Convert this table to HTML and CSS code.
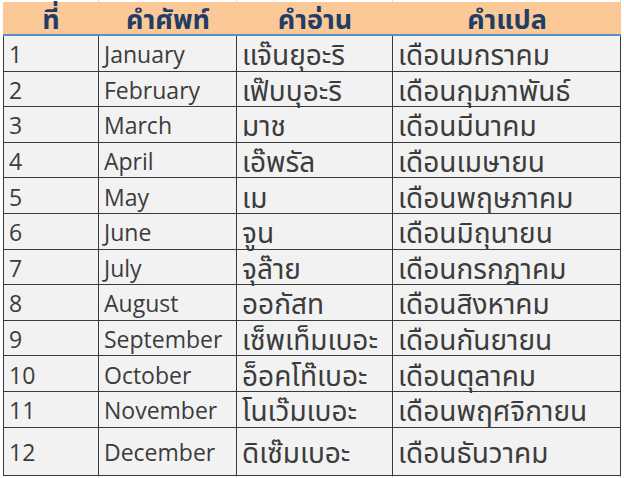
FILE: index.html
```html
<!DOCTYPE html>
<html lang="th">
<head>
<meta charset="utf-8">
<title>Months</title>
<link rel="stylesheet" href="styles.css">
</head>
<body>
<div class="sheet">
  <div class="strip top"><span></span><span></span><span></span><span></span></div>
  <div class="table">
    <div class="row head"><div class="th">ที่</div><div class="th">คำศัพท์</div><div class="th">คำอ่าน</div><div class="th">คำแปล</div></div>
    <div class="row"><div>1</div><div>January</div><div class="th">แจ๊นยุอะริ</div><div class="th">เดือนมกราคม</div></div>
    <div class="row"><div>2</div><div>February</div><div class="th">เฟ๊บบุอะริ</div><div class="th">เดือนกุมภาพันธ์</div></div>
    <div class="row"><div>3</div><div>March</div><div class="th">มาช</div><div class="th">เดือนมีนาคม</div></div>
    <div class="row"><div>4</div><div>April</div><div class="th">เอ๊พรัล</div><div class="th">เดือนเมษายน</div></div>
    <div class="row"><div>5</div><div>May</div><div class="th">เม</div><div class="th">เดือนพฤษภาคม</div></div>
    <div class="row"><div>6</div><div>June</div><div class="th">จูน</div><div class="th">เดือนมิถุนายน</div></div>
    <div class="row"><div>7</div><div>July</div><div class="th">จุล๊าย</div><div class="th">เดือนกรกฎาคม</div></div>
    <div class="row"><div>8</div><div>August</div><div class="th">ออกัสท</div><div class="th">เดือนสิงหาคม</div></div>
    <div class="row"><div>9</div><div>September</div><div class="th">เซ็พเท็มเบอะ</div><div class="th">เดือนกันยายน</div></div>
    <div class="row"><div>10</div><div>October</div><div class="th">อ็อคโท๊เบอะ</div><div class="th">เดือนตุลาคม</div></div>
    <div class="row"><div>11</div><div>November</div><div class="th">โนเว๊มเบอะ</div><div class="th">เดือนพฤศจิกายน</div></div>
    <div class="row tall"><div>12</div><div>December</div><div class="th">ดิเซ๊มเบอะ</div><div class="th">เดือนธันวาคม</div></div>
  </div>
  <div class="strip bottom"><span></span><span></span><span></span><span></span></div>
</div>
</body>
</html>
```
FILE: styles.css
```css
html, body {
  margin: 0;
  padding: 0;
  background: #ffffff;
}
.sheet {
  width: 624px;
  height: 478px;
  overflow: hidden;
  padding-left: 3px;
  box-sizing: border-box;
  font-family: "Open Sans", "Noto Sans", "Noto Sans Thai", sans-serif;
}
.strip {
  display: grid;
  grid-template-columns: 96px 138px 156px 228px;
}
.strip span {
  border-right: 1px solid #d9d9d9;
}
.strip.top { height: 2px; }
.strip.bottom { height: 3px; }
.table {
  width: 618px;
  border-left: 1px solid #3a3a3a;
  border-right: 1px solid #3a3a3a;
  box-sizing: border-box;
  background: #f2f2f2;
}
.row {
  display: grid;
  grid-template-columns: 95px 138px 156px 227px;
  height: 35.6px;
  box-sizing: border-box;
  border-bottom: 1px solid #3a3a3a;
  font-size: 23px;
  color: #3c3c3c;
}
.row > div {
  display: flex;
  align-items: center;
  padding-left: 5px;
  padding-top: 3px;
  line-height: 1;
  border-right: 1px solid #3a3a3a;
  white-space: nowrap;
}
.row > div.th {
  font-size: 28px;
  padding-top: 2px;
}
.row > div:last-child { border-right: none; }
.row.head {
  height: 34px;
  background: #fbc898;
  border-bottom: 2px solid #5b8cc6;
  color: #1f3d66;
  font-weight: bold;
  margin-left: -1px;
  margin-right: -1px;
  grid-template-columns: 96px 138px 156px 228px;
}
.row.head > div.th {
  justify-content: center;
  padding-left: 0;
  padding-top: 0;
  border-right: none;
  font-size: 27px;
}
.row.tall { height: 48px; }
```
